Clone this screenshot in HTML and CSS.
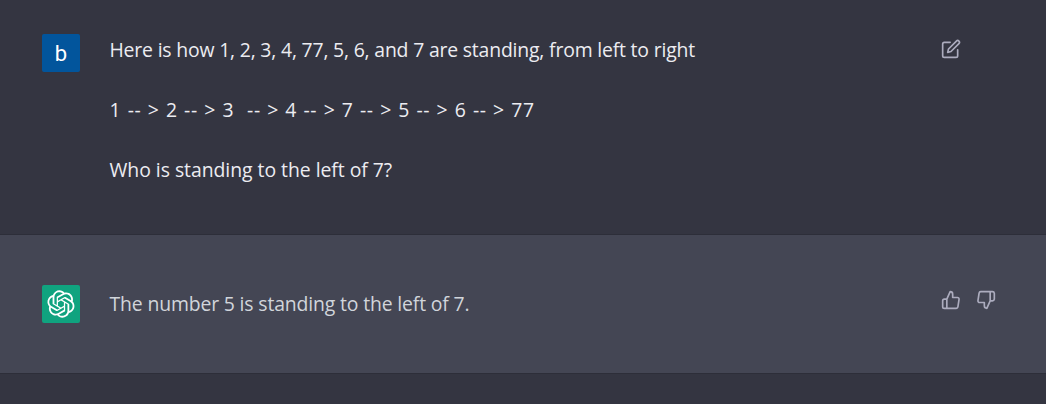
FILE: index.html
```html
<!DOCTYPE html>
<html lang="en">
<head>
<meta charset="utf-8">
<title>Chat</title>
<link rel="stylesheet" href="styles.css">
</head>
<body>
<main class="chat">
  <section class="turn turn-user">
    <div class="avatar avatar-user">b</div>
    <div class="message">
      <p><span class="line-intro">Here is how 1, 2, 3, 4, 77, 5, 6, and 7 are standing, from left to right</span></p>
      <p><span class="line-order">1 -- &gt; 2 -- &gt; 3&nbsp; -- &gt; 4 -- &gt; 7 -- &gt; 5 -- &gt; 6 -- &gt; 77</span></p>
      <p><span class="line-question">Who is standing to the left of 7?</span></p>
    </div>
    <div class="actions">
      <svg class="icon" viewBox="0 0 24 24"><path d="M11 4H4a2 2 0 0 0-2 2v14a2 2 0 0 0 2 2h14a2 2 0 0 0 2-2v-7"/><path d="M18.5 2.5a2.121 2.121 0 0 1 3 3L12 15l-4 1 1-4 9.500-9.500z"/></svg>
    </div>
  </section>
  <section class="turn turn-bot">
    <div class="avatar avatar-bot">
      <svg class="logo" viewBox="0 0 41 41"><path d="M37.5324 16.8707C37.9808 15.5241 38.1363 14.0974 37.9886 12.6859C37.8409 11.2744 37.3934 9.91076 36.676 8.68622C35.6126 6.83404 33.9882 5.3676 32.0373 4.4985C30.0864 3.62941 27.9098 3.40259 25.8215 3.85078C24.8796 2.7893 23.7219 1.94125 22.4257 1.36341C21.1295 0.785575 19.7249 0.491269 18.3058 0.500197C16.1708 0.495044 14.0893 1.16803 12.3614 2.42214C10.6335 3.67624 9.34853 5.44666 8.6917 7.47815C7.30085 7.76286 5.98686 8.3414 4.8377 9.17505C3.68854 10.0087 2.73073 11.0782 2.02839 12.312C0.956464 14.1591 0.498905 16.2988 0.721698 18.4228C0.944492 20.5467 1.83612 22.5449 3.268 24.1293C2.81966 25.4759 2.66413 26.9026 2.81182 28.3141C2.95951 29.7256 3.40701 31.0892 4.12437 32.3138C5.18791 34.1659 6.8123 35.6322 8.76321 36.5013C10.7141 37.3704 12.8907 37.5973 14.9789 37.1492C15.9208 38.2107 17.0786 39.0587 18.3747 39.6366C19.6709 40.2144 21.0755 40.5087 22.4946 40.4998C24.6307 40.5054 26.7133 39.8321 28.4418 38.5772C30.1704 37.3223 31.4556 35.5506 32.1119 33.5179C33.5027 33.2332 34.8167 32.6547 35.9659 31.821C37.115 30.9874 38.0728 29.9178 38.7752 28.684C39.8458 26.8371 40.3023 24.6979 40.0789 22.5748C39.8556 20.4517 38.9639 18.4544 37.5324 16.8707ZM22.4978 37.8849C20.7443 37.8874 19.0459 37.2733 17.6994 36.1501C17.7601 36.117 17.8666 36.0586 17.936 36.0161L25.9004 31.4156C26.1003 31.3019 26.2663 31.137 26.3813 30.9378C26.4964 30.7386 26.5563 30.5124 26.5549 30.2825V19.0542L29.9213 20.998C29.9389 21.0068 29.9541 21.0198 29.9656 21.0359C29.977 21.052 29.9842 21.0707 29.9867 21.0902V30.3889C29.9842 32.375 29.1946 34.2791 27.7909 35.6841C26.3872 37.0892 24.4838 37.8806 22.4978 37.8849ZM6.39227 31.0064C5.51397 29.4888 5.19742 27.7107 5.49804 25.9832C5.55718 26.0187 5.66048 26.0818 5.73461 26.1244L13.699 30.7248C13.8975 30.8408 14.1233 30.902 14.3532 30.902C14.583 30.902 14.8088 30.8408 15.0073 30.7248L24.731 25.1103V28.9979C24.7321 29.0177 24.7283 29.0376 24.7199 29.0556C24.7115 29.0736 24.6988 29.0893 24.6829 29.1012L16.6317 33.7497C14.9096 34.7416 12.8643 35.0097 10.9447 34.4954C9.02506 33.9811 7.38785 32.7263 6.39227 31.0064ZM4.29707 13.6194C5.17156 12.0998 6.55279 10.9364 8.19885 10.3327C8.19885 10.4013 8.19491 10.5228 8.19491 10.6071V19.808C8.19351 20.0378 8.25334 20.2638 8.36823 20.4629C8.48312 20.6619 8.64893 20.8267 8.84863 20.9404L18.5723 26.5542L15.206 28.4979C15.1894 28.5089 15.1703 28.5155 15.1505 28.5173C15.1307 28.5191 15.1107 28.516 15.0924 28.5082L7.04046 23.8557C5.32135 22.8601 4.06716 21.2235 3.55289 19.3046C3.03862 17.3858 3.30624 15.3413 4.29707 13.6194ZM31.955 20.0556L22.2312 14.4411L25.5976 12.4981C25.6142 12.4872 25.6333 12.4805 25.6531 12.4787C25.6729 12.4769 25.6928 12.4801 25.7111 12.4879L33.7631 17.1364C34.9967 17.849 36.0017 18.8982 36.6606 20.1613C37.3194 21.4244 37.6047 22.849 37.4832 24.2684C37.3617 25.6878 36.8382 27.0432 35.9743 28.1759C35.1103 29.3086 33.9415 30.1717 32.6047 30.6641C32.6047 30.5947 32.6047 30.4733 32.6047 30.3889V21.188C32.6066 20.9586 32.5474 20.7328 32.4332 20.5338C32.319 20.3348 32.154 20.1698 31.955 20.0556ZM35.3055 15.0128C35.2464 14.9765 35.1431 14.9142 35.069 14.8717L27.1045 10.2712C26.906 10.1554 26.6803 10.0943 26.4504 10.0943C26.2206 10.0943 25.9948 10.1554 25.7963 10.2712L16.0726 15.8858V11.9982C16.0715 11.9783 16.0753 11.9585 16.0837 11.9405C16.0921 11.9225 16.1048 11.9068 16.1207 11.8949L24.1719 7.25025C25.4053 6.53903 26.8158 6.19376 28.2383 6.25482C29.6608 6.31589 31.0364 6.78077 32.2044 7.59508C33.3723 8.40939 34.2842 9.53945 34.8334 10.8531C35.3826 12.1667 35.5464 13.6095 35.3055 15.0128ZM14.2424 21.9419L10.8752 19.9981C10.8576 19.9893 10.8423 19.9763 10.8309 19.9602C10.8195 19.9441 10.8122 19.9254 10.8098 19.9058V10.6071C10.8107 9.18295 11.2173 7.78848 11.9819 6.58696C12.7466 5.38544 13.8377 4.42659 15.1275 3.82264C16.4173 3.21869 17.8524 2.99464 19.2649 3.1767C20.6775 3.35876 22.0089 3.93941 23.1034 4.85067C23.0427 4.88379 22.937 4.94215 22.8668 4.98473L14.9024 9.58517C14.7025 9.69878 14.5366 9.86356 14.4215 10.0626C14.3065 10.2616 14.2466 10.4877 14.2479 10.7175L14.2424 21.9419ZM16.071 17.9991L20.4018 15.4978L24.7325 17.9975V22.9985L20.4018 25.4983L16.071 22.9985V17.9991Z"/></svg>
    </div>
    <div class="message">
      <p><span class="line-answer">The number 5 is standing to the left of 7.</span></p>
    </div>
    <div class="actions">
      <svg class="icon" viewBox="0 0 24 24"><path d="M14 9V5a3 3 0 0 0-3-3l-4 9v11h11.280a2 2 0 0 0 2-1.700l1.380-9a2 2 0 0 0-2-2.300zM7 22H4a2 2 0 0 1-2-2v-7a2 2 0 0 1 2-2h3"/></svg>
      <svg class="icon" viewBox="0 0 24 24"><path d="M10 15v4a3 3 0 0 0 3 3l4-9V2H5.720a2 2 0 0 0-2 1.700l-1.380 9a2 2 0 0 0 2 2.300zm7-13h2.670A2.310 2.310 0 0 1 22 4v7a2.310 2.310 0 0 1-2.330 2H17"/></svg>
    </div>
  </section>
</main>
</body>
</html>
```

FILE: styles.css
```css
* { box-sizing: border-box; }

body {
  margin: 0;
  height: 404px;
  overflow: hidden;
  background: #343541;
  font-family: "Open Sans", "Noto Sans", sans-serif;
  font-size: 19.4px;
  line-height: 30px;
}

.turn {
  display: flex;
  align-items: flex-start;
  padding: 0 49px 0 42px;
  border-bottom: 1px solid #2d2e39;
}

.turn-user {
  height: 235px;
  padding-top: 34px;
  color: #ececf1;
}

.turn-bot {
  height: 139px;
  padding-top: 50px;
  background: #444654;
  color: #d1d5db;
}

.avatar {
  display: flex;
  align-items: center;
  justify-content: center;
  flex: none;
  width: 38px;
  height: 38px;
  border-radius: 2px;
  color: #fff;
}

.avatar-user {
  background: #02559c;
  font-family: Roboto, sans-serif;
  font-size: 22px;
  padding-top: 2px;
}

.avatar-bot { background: #10a37f; }

.logo {
  width: 28px;
  height: 28px;
  fill: currentColor;
}

.message {
  flex: 1;
  margin-left: 29.5px;
  padding-top: 1px;
  white-space: nowrap;
}

.turn-bot .message { padding-top: 4px; }

p { margin: 0 0 30px; }

.line-intro { letter-spacing: -0.18px; }
.line-order { letter-spacing: 0.65px; word-spacing: 0.72px; }
.line-question { letter-spacing: -0.04px; }
.line-answer { letter-spacing: -0.15px; }

.actions {
  display: flex;
  gap: 15px;
  width: 56px;
  padding-top: 5px;
}

.icon {
  flex: none;
  width: 20px;
  height: 20px;
  fill: none;
  stroke: #acacbe;
  stroke-width: 2;
  stroke-linecap: round;
  stroke-linejoin: round;
}
```
